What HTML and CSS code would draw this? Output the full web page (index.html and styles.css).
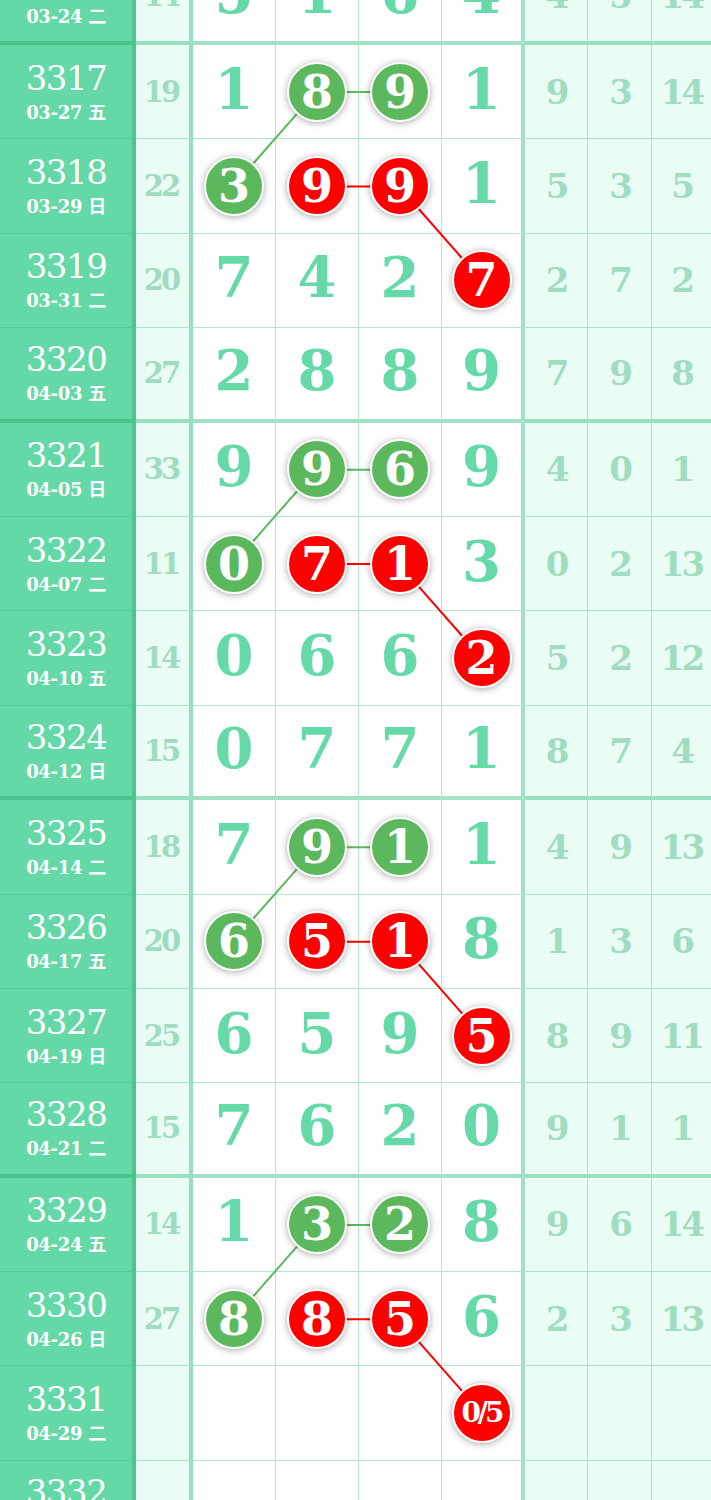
FILE: index.html
```html
<!DOCTYPE html>
<html lang="zh">
<head>
<meta charset="utf-8">
<title>走势图</title>
<link rel="stylesheet" href="styles.css">
</head>
<body>
<div class="chart">
  <svg class="links" width="711" height="1605" viewBox="0 0 711 1605">
    <g class="lg">
      <line x1="233" y1="235.5" x2="316" y2="141.1"/>
      <line x1="316" y1="141.1" x2="399" y2="141.1"/>
      <line x1="233" y1="613.1" x2="316" y2="518.7"/>
      <line x1="316" y1="518.7" x2="399" y2="518.7"/>
      <line x1="233" y1="990.7" x2="316" y2="896.3"/>
      <line x1="316" y1="896.3" x2="399" y2="896.3"/>
      <line x1="233" y1="1368.3" x2="316" y2="1273.9"/>
      <line x1="316" y1="1273.9" x2="399" y2="1273.9"/>
    </g>
    <g class="lr">
      <line x1="316" y1="235.5" x2="399" y2="235.5"/>
      <line x1="399" y1="235.5" x2="482" y2="329.9"/>
      <line x1="316" y1="613.1" x2="399" y2="613.1"/>
      <line x1="399" y1="613.1" x2="482" y2="707.5"/>
      <line x1="316" y1="990.7" x2="399" y2="990.7"/>
      <line x1="399" y1="990.7" x2="482" y2="1085.1"/>
      <line x1="316" y1="1368.3" x2="399" y2="1368.3"/>
      <line x1="399" y1="1368.3" x2="482" y2="1462.7"/>
    </g>
  </svg>

  <div class="row end">
    <div class="issue"><div class="no">3316</div><div class="date">03-24 二</div></div>
    <div class="sum">14</div>
    <div class="d">5</div><div class="d">1</div><div class="d">6</div><div class="d last">4</div>
    <div class="x">4</div><div class="x">5</div><div class="x">14</div>
  </div>

  <div class="row">
    <div class="issue"><div class="no">3317</div><div class="date">03-27 五</div></div>
    <div class="sum">19</div>
    <div class="d">1</div><div class="d"><span class="ball g">8</span></div><div class="d"><span class="ball g">9</span></div><div class="d last">1</div>
    <div class="x">9</div><div class="x">3</div><div class="x">14</div>
  </div>
  <div class="row">
    <div class="issue"><div class="no">3318</div><div class="date">03-29 日</div></div>
    <div class="sum">22</div>
    <div class="d"><span class="ball g">3</span></div><div class="d"><span class="ball r">9</span></div><div class="d"><span class="ball r">9</span></div><div class="d last">1</div>
    <div class="x">5</div><div class="x">3</div><div class="x">5</div>
  </div>
  <div class="row">
    <div class="issue"><div class="no">3319</div><div class="date">03-31 二</div></div>
    <div class="sum">20</div>
    <div class="d">7</div><div class="d">4</div><div class="d">2</div><div class="d last"><span class="ball r">7</span></div>
    <div class="x">2</div><div class="x">7</div><div class="x">2</div>
  </div>
  <div class="row end">
    <div class="issue"><div class="no">3320</div><div class="date">04-03 五</div></div>
    <div class="sum">27</div>
    <div class="d">2</div><div class="d">8</div><div class="d">8</div><div class="d last">9</div>
    <div class="x">7</div><div class="x">9</div><div class="x">8</div>
  </div>

  <div class="row">
    <div class="issue"><div class="no">3321</div><div class="date">04-05 日</div></div>
    <div class="sum">33</div>
    <div class="d">9</div><div class="d"><span class="ball g">9</span></div><div class="d"><span class="ball g">6</span></div><div class="d last">9</div>
    <div class="x">4</div><div class="x">0</div><div class="x">1</div>
  </div>
  <div class="row">
    <div class="issue"><div class="no">3322</div><div class="date">04-07 二</div></div>
    <div class="sum">11</div>
    <div class="d"><span class="ball g">0</span></div><div class="d"><span class="ball r">7</span></div><div class="d"><span class="ball r">1</span></div><div class="d last">3</div>
    <div class="x">0</div><div class="x">2</div><div class="x">13</div>
  </div>
  <div class="row">
    <div class="issue"><div class="no">3323</div><div class="date">04-10 五</div></div>
    <div class="sum">14</div>
    <div class="d">0</div><div class="d">6</div><div class="d">6</div><div class="d last"><span class="ball r">2</span></div>
    <div class="x">5</div><div class="x">2</div><div class="x">12</div>
  </div>
  <div class="row end">
    <div class="issue"><div class="no">3324</div><div class="date">04-12 日</div></div>
    <div class="sum">15</div>
    <div class="d">0</div><div class="d">7</div><div class="d">7</div><div class="d last">1</div>
    <div class="x">8</div><div class="x">7</div><div class="x">4</div>
  </div>

  <div class="row">
    <div class="issue"><div class="no">3325</div><div class="date">04-14 二</div></div>
    <div class="sum">18</div>
    <div class="d">7</div><div class="d"><span class="ball g">9</span></div><div class="d"><span class="ball g">1</span></div><div class="d last">1</div>
    <div class="x">4</div><div class="x">9</div><div class="x">13</div>
  </div>
  <div class="row">
    <div class="issue"><div class="no">3326</div><div class="date">04-17 五</div></div>
    <div class="sum">20</div>
    <div class="d"><span class="ball g">6</span></div><div class="d"><span class="ball r">5</span></div><div class="d"><span class="ball r">1</span></div><div class="d last">8</div>
    <div class="x">1</div><div class="x">3</div><div class="x">6</div>
  </div>
  <div class="row">
    <div class="issue"><div class="no">3327</div><div class="date">04-19 日</div></div>
    <div class="sum">25</div>
    <div class="d">6</div><div class="d">5</div><div class="d">9</div><div class="d last"><span class="ball r">5</span></div>
    <div class="x">8</div><div class="x">9</div><div class="x">11</div>
  </div>
  <div class="row end">
    <div class="issue"><div class="no">3328</div><div class="date">04-21 二</div></div>
    <div class="sum">15</div>
    <div class="d">7</div><div class="d">6</div><div class="d">2</div><div class="d last">0</div>
    <div class="x">9</div><div class="x">1</div><div class="x">1</div>
  </div>

  <div class="row">
    <div class="issue"><div class="no">3329</div><div class="date">04-24 五</div></div>
    <div class="sum">14</div>
    <div class="d">1</div><div class="d"><span class="ball g">3</span></div><div class="d"><span class="ball g">2</span></div><div class="d last">8</div>
    <div class="x">9</div><div class="x">6</div><div class="x">14</div>
  </div>
  <div class="row">
    <div class="issue"><div class="no">3330</div><div class="date">04-26 日</div></div>
    <div class="sum">27</div>
    <div class="d"><span class="ball g">8</span></div><div class="d"><span class="ball r">8</span></div><div class="d"><span class="ball r">5</span></div><div class="d last">6</div>
    <div class="x">2</div><div class="x">3</div><div class="x">13</div>
  </div>
  <div class="row">
    <div class="issue"><div class="no">3331</div><div class="date">04-29 二</div></div>
    <div class="sum"></div>
    <div class="d"></div><div class="d"></div><div class="d"></div><div class="d last"><span class="ball r small">0/5</span></div>
    <div class="x"></div><div class="x"></div><div class="x"></div>
  </div>
  <div class="row end">
    <div class="issue"><div class="no">3332</div><div class="date">05-01 五</div></div>
    <div class="sum"></div>
    <div class="d"></div><div class="d"></div><div class="d"></div><div class="d last"></div>
    <div class="x"></div><div class="x"></div><div class="x"></div>
  </div>
</div>
</body>
</html>
```

FILE: styles.css
```css
html, body {
  margin: 0;
  padding: 0;
  overflow: hidden;
  background: #ffffff;
}

.chart {
  position: relative;
  width: 711px;
  margin-top: -49.4px;
  font-family: "DejaVu Serif", "Noto Sans CJK SC", serif;
}

.links {
  position: absolute;
  left: 0;
  top: 0;
  z-index: 1;
  pointer-events: none;
}

.links line {
  stroke-width: 2;
}

.lg line { stroke: #5cb85c; }
.lr line { stroke: #ff0000; }

.row {
  display: grid;
  grid-template-columns: 136px 57px 83px 83px 83px 83px 63px 64px 59px;
  height: 94.4px;
}

.row > div {
  box-sizing: border-box;
  border-bottom: 1px solid rgba(80, 205, 150, 0.45);
  border-right: 1px solid rgba(80, 205, 150, 0.45);
  display: flex;
  align-items: center;
  justify-content: center;
}

.row.end > div {
  border-bottom: 4px solid rgba(70, 195, 140, 0.5);
}

.issue {
  background: #64d8a6;
  color: #ffffff;
  flex-direction: column;
  border-right: 4px solid rgba(50, 175, 120, 0.45) !important;
}

.row > .issue {
  border-bottom-color: rgba(40, 160, 110, 0.25);
}

.row.end > .issue {
  border-bottom-color: rgba(40, 160, 110, 0.4);
}

.issue .no {
  font-size: 34px;
  line-height: 38px;
  letter-spacing: -1.5px;
}

.issue .date {
  font-size: 18px;
  line-height: 24px;
  font-weight: bold;
  letter-spacing: -0.3px;
  margin-top: 4px;
}

.sum {
  background: #e9fdf4;
  color: #9fdcbf;
  font-size: 29px;
  font-weight: bold;
  border-right: 4px solid rgba(70, 195, 140, 0.5) !important;
  letter-spacing: -3px;
  padding-right: 3px;
}

.d {
  background: #ffffff;
  color: #66d9a9;
  font-size: 56px;
  font-weight: bold;
  padding-bottom: 6px;
}

.d.last {
  border-right: 4px solid rgba(70, 195, 140, 0.5) !important;
}

.x {
  background: #e9fdf4;
  color: #a0dcbf;
  font-size: 34px;
  font-weight: bold;
  letter-spacing: -3px;
}

.x:last-child {
  border-right: none !important;
}

.ball {
  position: relative;
  z-index: 2;
  box-sizing: border-box;
  width: 60px;
  height: 60px;
  border: 2px solid #ffffff;
  border-radius: 50%;
  box-shadow: 0 1px 7px rgba(0, 0, 0, 0.35);
  display: flex;
  align-items: center;
  justify-content: center;
  color: #ffffff;
  font-size: 46px;
  font-weight: bold;
  line-height: 1;
  margin-top: 6px;
  letter-spacing: 0;
}

.ball.g { background: #5cb85c; }
.ball.r { background: #ff0000; }

.ball.small {
  font-size: 28px;
  letter-spacing: -3px;
}
```
